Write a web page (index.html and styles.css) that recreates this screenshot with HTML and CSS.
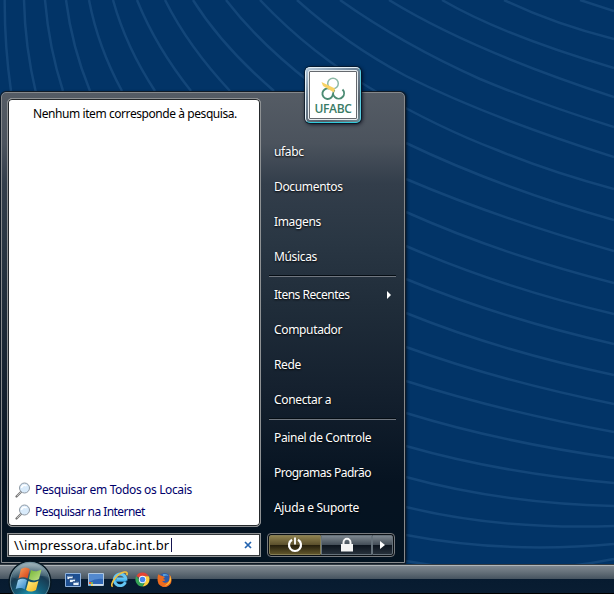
FILE: index.html
```html
<!DOCTYPE html>
<html lang="pt-BR">
<head>
<meta charset="utf-8">
<title>Menu Iniciar</title>
<link rel="stylesheet" href="styles.css">
</head>
<body>
<div class="desktop">
  <svg class="wallpaper" viewBox="0 0 614 594" aria-hidden="true">
    <path d="M4.7 0Q4.500 45 11 91M24 0Q25 47 36 93M45 0Q49 48 63 91M66 0Q72 47 90 91M89 0Q98 47 122 91M113 0Q126 47 155 91M137 0Q156 47 191 91M165 0Q188 46 230 91M193 0Q222 46 274 91M226 0Q259 43 312 84M260 0Q311 54 375 91T497 150Q550 172 614 189"/>
    <path d="M297 0Q346 44 406 76Q485 116 614 157M340 0Q402 44 480 79Q540 104 614 127M389 0Q470 50 614 97M442 0Q502 35 614 68M504 0Q554 24 614 39M580 0L614 11"/>
    <path d="M406 143Q500 188 614 220M406 179Q500 219 614 251M406 212Q500 254 614 283M406 246Q500 287 614 314M406 279Q500 318 614 344M406 313Q500 351 614 375M406 347Q500 381 614 404M406 381Q500 411 614 432M406 413Q500 442 614 458M406 446Q500 473 614 483M406 477Q500 503 614 506M406 507Q500 530 614 526M406 535Q505 554 614 544M406 561Q510 580 614 559"/>
  </svg>

  <div class="start-menu">
    <div class="left-pane">
      <div class="results">
        <p class="empty">Nenhum item corresponde à pesquisa.</p>
        <ul class="search-links">
          <li><svg class="lens" viewBox="0 0 16 16"><path d="M6 10L1.500 14.500" stroke="#777" stroke-width="2.200" stroke-linecap="round"/><path d="M6 10L2 14" stroke="#d6d6d6" stroke-width=".8"/><circle cx="9.500" cy="6" r="5" fill="#d9ebfb" stroke="#8f9aa5"/><path d="M6.500 6a3 3 0 0 1 5-2" fill="none" stroke="#fff" stroke-width="1.600"/></svg><span>Pesquisar em Todos os Locais</span></li>
          <li><svg class="lens" viewBox="0 0 16 16"><path d="M6 10L1.500 14.500" stroke="#777" stroke-width="2.200" stroke-linecap="round"/><path d="M6 10L2 14" stroke="#d6d6d6" stroke-width=".8"/><circle cx="9.500" cy="6" r="5" fill="#d9ebfb" stroke="#8f9aa5"/><path d="M6.500 6a3 3 0 0 1 5-2" fill="none" stroke="#fff" stroke-width="1.600"/></svg><span class="tight">Pesquisar na Internet</span></li>
        </ul>
      </div>
      <div class="search-box"><span class="query">\\impressora.ufabc.int.br</span><i class="caret"></i>
        <svg class="clear" viewBox="0 0 8 8"><path d="M1 1L7 7M7 1L1 7" stroke="#2464b0" stroke-width="1.700"/></svg>
      </div>
    </div>
    <div class="right-pane">
      <nav class="places">
        <a>ufabc</a>
        <a>Documentos</a>
        <a>Imagens</a>
        <a>Músicas</a>
        <hr>
        <a class="more">Itens Recentes</a>
        <a>Computador</a>
        <a>Rede</a>
        <a>Conectar a</a>
        <hr>
        <a>Painel de Controle</a>
        <a class="tight">Programas Padrão</a>
        <a>Ajuda e Suporte</a>
      </nav>
      <div class="power-bar">
        <div class="pbtn power"><svg width="16" height="16" viewBox="0 0 16 16"><path d="M5 2.800a6 6 0 1 0 6 0" fill="none" stroke="#fff" stroke-width="2.200"/><path d="M8 .5v7" stroke="#fff" stroke-width="1.800"/></svg></div>
        <div class="pbtn lock"><svg width="14" height="16" viewBox="0 0 14 16"><path d="M3.500 8V5.500a3.500 3.800 0 0 1 7 0V8" fill="none" stroke="#f4f4f4" stroke-width="2"/><path d="M1 7h12v7.500H1z" fill="#f4f4f4"/></svg></div>
        <div class="pbtn arrow"><i class="tri"></i></div>
      </div>
    </div>
    <div class="avatar">
      <div class="picture">
        <svg class="rings" viewBox="0 0 26 24" fill="none"><circle cx="13" cy="6.500" r="5.300" stroke="#8db9a7" stroke-width="1.500"/><path d="M9.500 11.700A5.300 5.300 0 1 0 13 16.500" stroke="#4b8b73" stroke-width="1.900"/><path d="M14.500 12.800A5.400 5.400 0 1 0 22.500 12.500" stroke="#4b8b73" stroke-width="1.900"/><path d="M1.500 5L15 11.500L14 15.500L3 9z" fill="#f8d264"/></svg>
        <span class="brand">UFABC</span>
      </div>
    </div>
  </div>

  <div class="taskbar">
    <div class="orb">
      <svg viewBox="0 0 44 44">
        <defs>
          <radialGradient id="glass" cx=".5" cy=".95" r=".85"><stop offset="0" stop-color="#22b8cf"/><stop offset=".4" stop-color="#14617d"/><stop offset=".75" stop-color="#183b52"/><stop offset="1" stop-color="#708894"/></radialGradient>
          <linearGradient id="shine" x1="0" y1="0" x2="0" y2="1"><stop offset="0" stop-color="#b9cbd0" stop-opacity=".6"/><stop offset="1" stop-color="#668792" stop-opacity=".2"/></linearGradient>
          <linearGradient id="red" x1="0" y1="0" x2="1" y2="1"><stop stop-color="#f6a25d"/><stop offset="1" stop-color="#d53a13"/></linearGradient>
          <linearGradient id="green" x1="0" y1="0" x2="1" y2="1"><stop stop-color="#71b532"/><stop offset="1" stop-color="#c4e18b"/></linearGradient>
          <linearGradient id="blue" x1="0" y1="0" x2="1" y2="1"><stop stop-color="#b4e1f4"/><stop offset="1" stop-color="#2c82c9"/></linearGradient>
          <linearGradient id="gold" x1="0" y1="0" x2="1" y2="1"><stop stop-color="#fff08a"/><stop offset="1" stop-color="#f7b51a"/></linearGradient>
        </defs>
        <circle cx="22" cy="22" r="20.800" fill="url(#glass)" stroke="#071722" stroke-width="1.500"/>
        <circle cx="22" cy="22" r="19.700" fill="none" stroke="#80a2ad" stroke-width=".8" opacity=".8"/>
        <path d="M4 17C7 7 14 3 22 3s15 4 18 14C29 13 15 24 4 17z" fill="url(#shine)"/>
        <g transform="translate(0 -1.500)">
        <path d="M13 10.500c3-2 6-2 8.700 0L19.500 20c-3-2-6-1.500-9 0z" fill="url(#red)"/>
        <path d="M23 11.500c3 1.800 6 1.800 10.500-.5L31 20.500c-4 2.300-7 1.500-10.200 0z" fill="url(#green)"/>
        <path d="M10 21.500c3-1.700 6-1.800 9 0L16.700 31c-3-2-6-1.800-9-.5z" fill="url(#blue)"/>
        <path d="M20.500 22.500c3 1.700 6 1.700 10-.3L28 31.500c-4 2-7 2-10 0z" fill="url(#gold)"/>
        </g>
      </svg>
    </div>
    <div class="quick">
      <svg viewBox="0 0 16 14"><path d="M.5.500h15v13H.5z" fill="#1d4f92" stroke="#8fb2dd"/><path d="M2 2.500h6v4H2zM4.500 5.500h6v4h-6zM8 8.500h6v4H8z" fill="#e6f1fb" stroke="#143b73" stroke-width=".7"/><path d="M2.500 3.500h5M5 6.500h5M8.500 9.500h5" stroke="#4b7ab4" stroke-width=".8"/></svg>
      <svg viewBox="0 0 16 14"><path d="M.5.500h15v12H.5z" fill="#2f66b5" stroke="#aec6df"/><path d="M1 1h14v5Q8 5 1 9z" fill="#5389cf"/><path d="M1 11h14v1.500H1z" fill="#cfdae5"/><path d="M1 9h2v2H1z" fill="#e85b2b"/><path d="M3.200 9h1.500v2H3.200z" fill="#8ecb48"/><path d="M1 11.500h2v1.500H1z" fill="#4bb4e8"/><path d="M3.200 11.300h1.600V13H3.200z" fill="#ffd03a"/></svg>
      <svg class="big" viewBox="0 0 16 16"><path d="M13.600 10.500a5.500 5.500 0 1 1 .4-3H5" fill="none" stroke="#65c7f4" stroke-width="2.700"/><path d="M4 9h10.500" stroke="#3fb0ed" stroke-width="2"/><path d="M1.500 14.800C-1.500 12 6 2 12.500 1c3-.4 3 1.500 2.300 3" fill="none" stroke="#f4c03b" stroke-width="1.500"/></svg>
      <svg class="round" viewBox="0 0 16 16"><path d="M8 8L1.500 4.200A7.500 7.500 0 0 1 14.600 4.500H8z" fill="#e24434"/><path d="M8 8l3.200 1.800L8 15.500A7.500 7.500 0 0 0 14.600 4.500H8z" fill="#fccd3c"/><path d="M1.500 4.200A7.500 7.500 0 0 0 8 15.500l3.200-5.700L8 8H4z" fill="#35a556"/><circle cx="8" cy="8" r="3.900" fill="#fff"/><circle cx="8" cy="8" r="3" fill="#4586ee"/></svg>
      <svg class="round" viewBox="0 0 16 16"><circle cx="8.200" cy="7.600" r="6.500" fill="#2d5ba8"/><path d="M6 2.500Q10 1 12.500 4Q9 3 7 5z" fill="#59a5dd"/><path d="M1.500 2.500Q.2 5 .7 9.500A7.400 7.400 0 0 0 15.500 8Q15.600 4 12.500 2Q14 5 13 8.500C12 12 7 12.500 5.500 9.300Q8 10 9 8.500L6.500 7.500L8.500 5.500L5 4Q3 3.800 1.500 2.500z" fill="#ed6b1f"/><path d="M14 4Q15.500 7 14.500 10Q12 14.500 7.500 14.500Q12 12.500 13.200 9z" fill="#ffc039"/></svg>
    </div>
  </div>
</div>
</body>
</html>
```
FILE: styles.css
```css
* { box-sizing: border-box; }
body { margin: 0; }
.desktop {
  position: relative;
  width: 614px;
  height: 594px;
  overflow: hidden;
  display: flex;
  flex-direction: column;
  justify-content: flex-end;
  background: #023467;
  font: 12px/16px "Noto Sans", "Open Sans", sans-serif;
}
.wallpaper { position: absolute; inset: 0; width: 614px; height: 594px; }
.wallpaper path { fill: none; stroke: #134679; stroke-width: 2.5; }

.start-menu {
  position: relative;
  width: 404px;
  height: 471px;
  margin: 0 0 1px 1px;
  display: flex;
  padding: 5px;
  gap: 6px;
  border: 1px solid #86898c;
  border-radius: 5px 5px 0 0;
  background: linear-gradient(#555c65 0, #4b535d 50px, #333e4b 90px, #293643 150px, #202d3a 210px, #14202e 300px, #061321 390px, #031321 100%);
  box-shadow: 0 0 0 1px #101b27, 2px 0 3px rgba(0, 0, 0, .6);
}
.left-pane { width: 254px; display: flex; flex-direction: column; gap: 6px; }
.results {
  height: 429px;
  border: 1px solid #8f9294;
  border-radius: 5px;
  background: #fff;
  box-shadow: inset 0 0 0 1px #25292c;
  display: flex;
  flex-direction: column;
  justify-content: space-between;
  padding: 7px 7px 3px;
}
.empty { margin: 0; padding-left: 2px; text-align: center; font-size: 12px; letter-spacing: -.43px; white-space: nowrap; }
.search-links { list-style: none; margin: 0; padding: 0; color: #00006b; letter-spacing: -.36px; }
.search-links li { display: flex; align-items: center; height: 22px; gap: 4px; }
.search-links .tight { letter-spacing: -.56px; }
.lens { width: 16px; height: 16px; }
.search-box {
  height: 24px;
  display: flex;
  align-items: center;
  background: #fff;
  border: 1px solid #8f9294;
  box-shadow: inset 0 0 0 1px #34383b;
  padding: 0 8px 0 6px;
  font-size: 13px;
}
.query { letter-spacing: .12px; white-space: nowrap; }
.caret { width: 1px; height: 14px; margin-left: 2px; background: #151550; }
.clear { width: 8px; height: 8px; margin-left: auto; }

.right-pane { width: 130px; display: flex; flex-direction: column; justify-content: space-between; }
.places { padding-top: 36px; display: flex; flex-direction: column; color: #fff; letter-spacing: -.34px; text-shadow: 0 1px 2px #000; }
.places a { height: 35px; padding-left: 7px; line-height: 35px; white-space: nowrap; }
.places .tight { letter-spacing: -.5px; }
.places hr { width: 127px; height: 2px; margin: 1px 0 0 2px; border: 0; border-top: 1px solid #050d14; background: #707780; }
.places .more { display: flex; align-items: center; justify-content: space-between; padding-right: 6px; letter-spacing: -.5px; }
.more::after { content: ""; border: 4px solid transparent; border-left-color: #fff; border-right: 0; }
.power-bar {
  width: 128px;
  height: 24px;
  display: flex;
  border: 1px solid #777b7f;
  border-radius: 4px;
  padding: 1px;
  background: #0a0f14;
}
.pbtn { display: flex; align-items: center; justify-content: center; border: 1px solid #65717a; background: linear-gradient(#7c868e, #454f59 48%, #0c141e 50%, #26303a); }
.power { width: 52px; border-color: #847d55; border-radius: 2px 0 0 2px; background: linear-gradient(#8e814f, #5c512d 48%, #231d0b 50%, #60552b); }
.lock { width: 51px; }
.arrow { width: 21px; border-radius: 0 2px 2px 0; }
.tri { border: 4px solid transparent; border-left: 5px solid #fff; border-right: 0; }

.avatar {
  position: absolute;
  left: 303px;
  top: -26px;
  width: 56px;
  height: 56px;
  padding: 3px;
  border-radius: 5px;
  border: 1px solid #e4f0f7;
  border-right-color: #58cde0;
  border-bottom-color: #32cbdc;
  background: linear-gradient(150deg, #b7cbdc, #71869a 35%, #565f69 75%, #718b94);
  box-shadow: 0 0 0 1px rgba(5, 22, 36, .7), 1px 1px 4px #001;
}
.picture { height: 48px; background: #fff; border: 1px solid #65696e; outline: 1px solid #e8edf0; border-radius: 1px; display: flex; flex-direction: column; align-items: center; padding-top: 5px; }
.rings { width: 26px; height: 24px; }
.brand { font: 600 12px/13px "Open Sans", sans-serif; color: #397b65; letter-spacing: -.4px; margin-top: 1px; }

.taskbar {
  position: relative;
  height: 30px;
  display: flex;
  padding: 2px 0 0 8px;
  border-top: 1px solid #343c43;
  background: linear-gradient(#b0b6ba 0 1px, #7e8790 1px, #66717a 7px, #45535f 14px, #071b30 14px, #091d32 28px, #000 28px);
}
.orb { width: 44px; height: 44px; margin-top: -7px; flex: none; }
.orb svg { display: block; width: 44px; height: 44px; }
.quick { display: flex; align-items: center; height: 25px; margin-left: 13px; gap: 7px; }
.quick svg { width: 16px; height: 14px; }
.quick .big { width: 17px; height: 17px; }
.quick .round { width: 15px; height: 15px; }
```
